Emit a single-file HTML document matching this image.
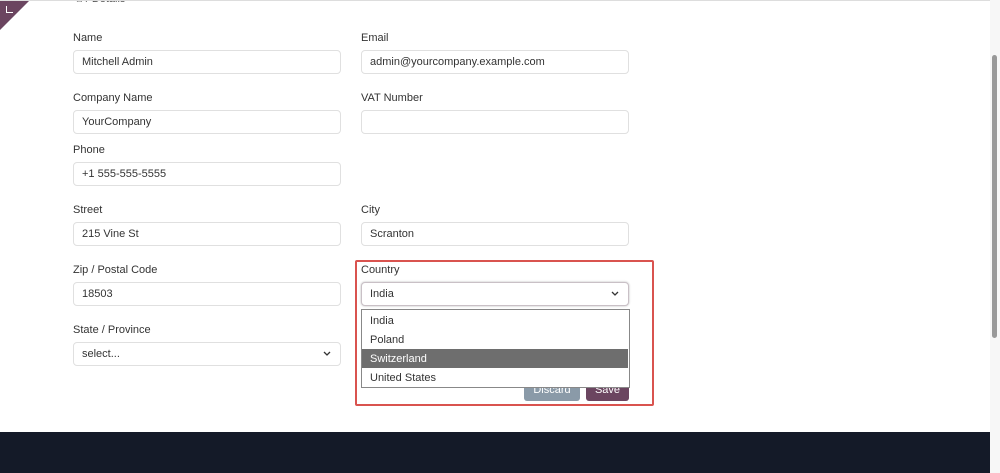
<!DOCTYPE html><html><head><style>
body{margin:0;width:1000px;height:473px;overflow:hidden;background:#fff;font-family:"Liberation Sans",sans-serif;position:relative}
.a{position:absolute}
.l{position:absolute;font-size:11px;color:#333}
.i{position:absolute;border:1px solid #e0e0e0;border-radius:4px;height:24px;box-sizing:border-box;font-size:11px;color:#333;padding:5px 8px;background:#fff}
.o{position:absolute;left:362px;width:266px;height:19px;font-size:11px;color:#333;padding:4px 8px;box-sizing:border-box}
.c{position:absolute;right:9px;top:8px}
</style></head><body>
<div class="a" style="left:0;top:0;width:0;height:0;border-top:30px solid #6b4560;border-right:30px solid transparent"></div>
<div class="a" style="left:6px;top:6px;width:6px;height:6px;border-left:1.5px solid #fff;border-bottom:1.5px solid #fff"></div>
<div class="l" style="left:76px;top:-7px;color:#555">⌂ / Details</div>
<div class="a" style="left:0;top:0;width:990px;height:1px;background:#ddd"></div>
<div class="l" style="left:73px;top:32px">Name</div>
<div class="i" style="left:73px;top:50px;width:268px">Mitchell Admin</div>
<div class="l" style="left:361px;top:32px">Email</div>
<div class="i" style="left:361px;top:50px;width:268px">admin@yourcompany.example.com</div>
<div class="l" style="left:73px;top:92px">Company Name</div>
<div class="i" style="left:73px;top:110px;width:268px">YourCompany</div>
<div class="l" style="left:361px;top:92px">VAT Number</div>
<div class="i" style="left:361px;top:110px;width:268px"></div>
<div class="l" style="left:73px;top:144px">Phone</div>
<div class="i" style="left:73px;top:162px;width:268px">+1 555-555-5555</div>
<div class="l" style="left:73px;top:204px">Street</div>
<div class="i" style="left:73px;top:222px;width:268px">215 Vine St</div>
<div class="l" style="left:361px;top:204px">City</div>
<div class="i" style="left:361px;top:222px;width:268px">Scranton</div>
<div class="l" style="left:73px;top:264px">Zip / Postal Code</div>
<div class="i" style="left:73px;top:282px;width:268px">18503</div>
<div class="l" style="left:73px;top:324px">State / Province</div>
<div class="i" style="left:73px;top:342px;width:268px">select...<svg class="c" width="8" height="5" viewBox="0 0 8 5"><path d="M1 1l3 3 3-3" fill="none" stroke="#333" stroke-width="1.3"/></svg></div>
<div class="a" style="left:355px;top:260px;width:295px;height:142px;border:2px solid #d9534f;border-radius:2px"></div>
<div class="l" style="left:361px;top:264px">Country</div>
<div class="i" style="left:361px;top:282px;width:268px;border-color:#c9c0c6;box-shadow:0 0 2px #bbb">India<svg class="c" width="8" height="5" viewBox="0 0 8 5"><path d="M1 1l3 3 3-3" fill="none" stroke="#333" stroke-width="1.3"/></svg></div>
<div class="a" style="left:524px;top:380px;width:56px;height:21px;background:#8a9aa8;border-radius:3px;color:#fff;font-size:11px;text-align:center;line-height:21px">Discard</div>
<div class="a" style="left:586px;top:380px;width:43px;height:21px;background:#6b4560;border-radius:3px;color:#fff;font-size:11px;text-align:center;line-height:21px">Save</div>
<div class="a" style="left:361px;top:309px;width:267px;height:77px;border:1px solid #888;background:#fff"></div>
<div class="o" style="top:311px">India</div>
<div class="o" style="top:330px">Poland</div>
<div class="o" style="top:349px;background:#6e6e6e;color:#fff">Switzerland</div>
<div class="o" style="top:368px">United States</div>
<div class="a" style="left:0;top:432px;width:990px;height:41px;background:#141a28"></div>
<div class="a" style="left:990px;top:0;width:10px;height:473px;background:#f7f7f7"></div>
<div class="a" style="left:992px;top:55px;width:5px;height:283px;background:#999;border-radius:3px"></div>
</body></html>
